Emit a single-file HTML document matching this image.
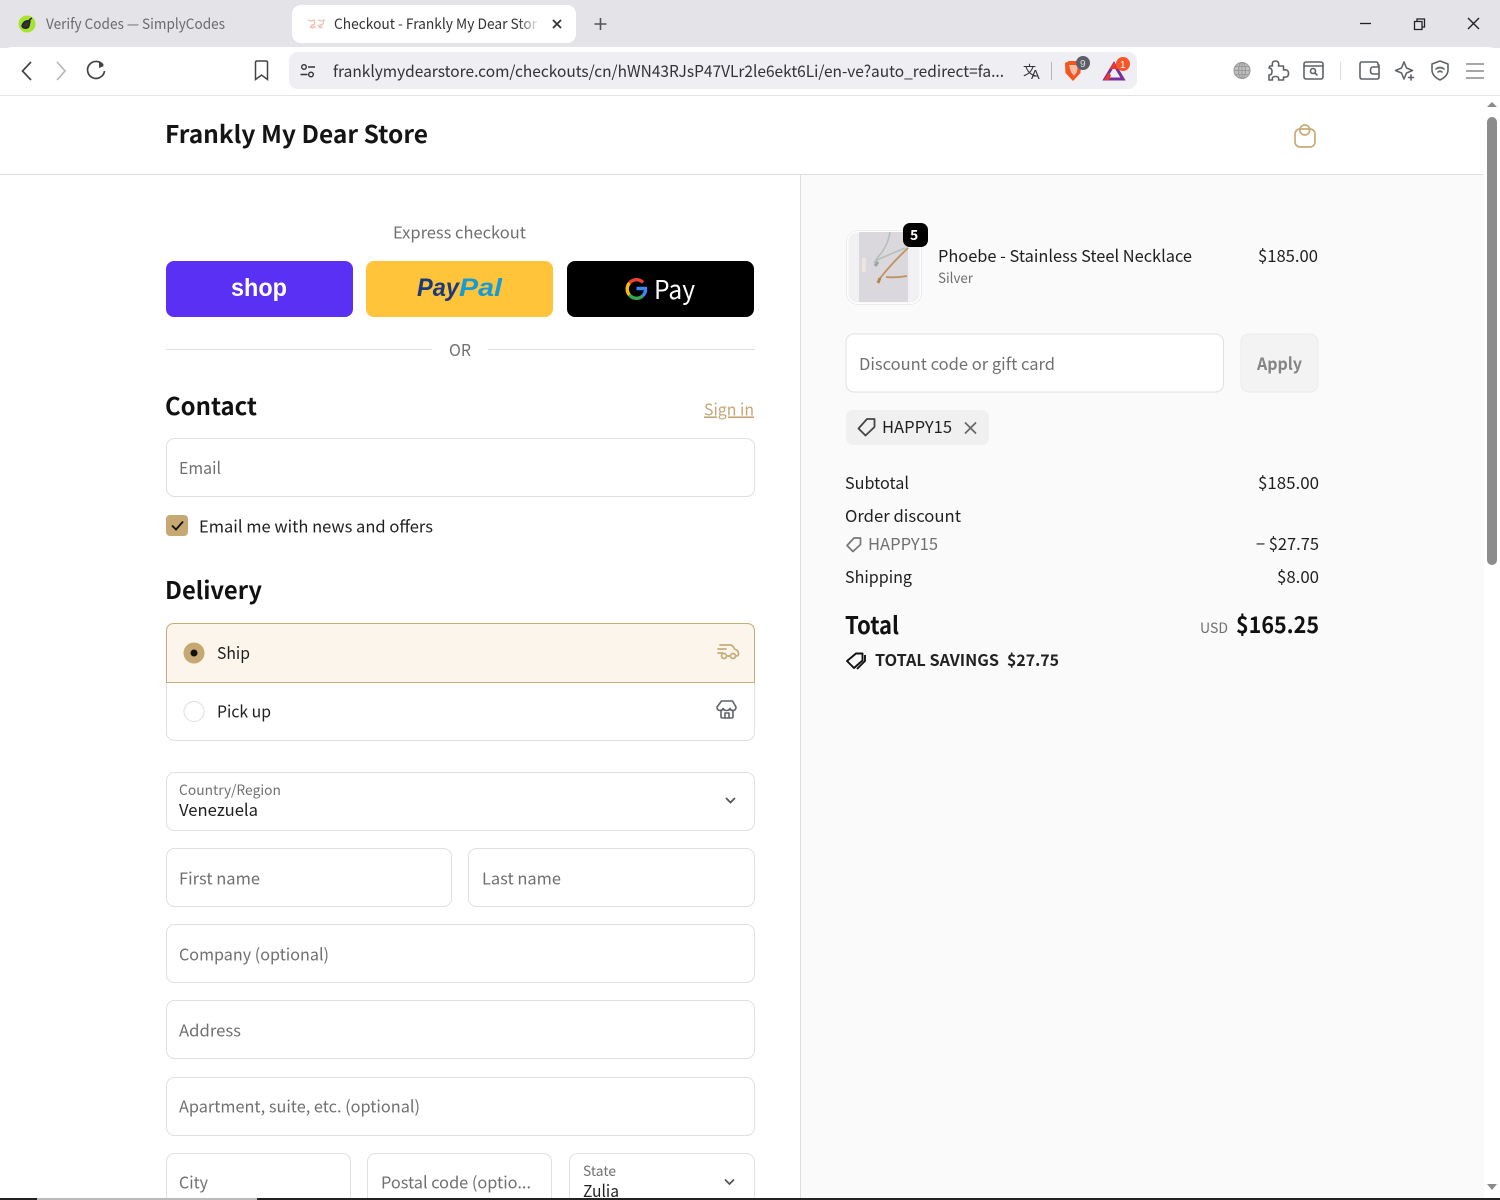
<!DOCTYPE html>
<html lang="en"><head><meta charset="utf-8"><title>Checkout - Frankly My Dear Store</title>
<style>
html,body{margin:0;padding:0;width:1500px;height:1200px;overflow:hidden;background:#fff}
svg{display:block}
text{font-family:"Noto Sans CJK JP","Liberation Sans",sans-serif;white-space:pre}
.l{font-family:"Liberation Sans",sans-serif}
.b{fill:#1f1f1f;font-size:16.5px}
.p{fill:#707070;font-size:16.5px}
.h{fill:#111;font-size:24px;font-weight:700}
.box{fill:#fff;stroke:#e0e0e0;stroke-width:1}
.ic{fill:none;stroke:#5f6368;stroke-width:1.6;stroke-linecap:round;stroke-linejoin:round}
.g{fill:none;stroke:#c9ab78;stroke-width:1.7;stroke-linecap:round;stroke-linejoin:round}
</style></head><body>
<svg width="1500" height="1200" viewBox="0 0 1500 1200" xmlns="http://www.w3.org/2000/svg">
<defs>
<linearGradient id="fade" x1="0" x2="1"><stop offset="0" stop-color="#fff" stop-opacity="0"/><stop offset="1" stop-color="#fff"/></linearGradient>
</defs>
<!-- browser chrome -->
<rect width="1500" height="48" fill="#e3e3e8"/>
<path d="M0 96V60Q0 47 13 47H1487Q1500 47 1500 60V96Z" fill="#fff"/>
<rect x="0" y="95" width="1500" height="1" fill="#e4e4e4"/>
<circle cx="27" cy="24" r="8.5" fill="#a6e22e"/>
<path d="M22 26c1-4 4-6 8-5l-1 5c-1 3-6 3-7 0zM29 20l3-2" fill="#333" stroke="#222" stroke-width="1.400"/>
<text x="46" y="29" font-size="14.5" fill="#6b6b6b" textLength="179" lengthAdjust="spacingAndGlyphs">Verify Codes — SimplyCodes</text>
<rect x="292" y="5" width="284" height="38" rx="9" fill="#fff"/>
<path d="M308 20l3 1 3-1 1 4-3 1 3 2-3 1-1-2-1 2M318 20l3 1 3-1-1 4-3 1 2 2-2 1-2-3" fill="none" stroke="#edc4b5" stroke-width="1.300"/>
<text x="334" y="29" font-size="14.5" fill="#333" textLength="203" lengthAdjust="spacingAndGlyphs">Checkout - Frankly My Dear Stor</text>
<rect x="518" y="8" width="22" height="32" fill="url(#fade)"/>
<path d="M553 20l8 8M561 20l-8 8" stroke="#333" stroke-width="1.800" fill="none"/>
<path d="M600.500 18v12M594.500 24h12" stroke="#555" stroke-width="1.600" fill="none"/>
<path d="M1360 23.500h11" stroke="#222" stroke-width="1.300" fill="none"/>
<path d="M1414.500 21.500h7.500v8h-7.500zM1417 21.500v-2.500h7.500v8h-2.500" stroke="#222" stroke-width="1.300" fill="none"/>
<path d="M1468 18l11 11M1479 18l-11 11" stroke="#222" stroke-width="1.400" fill="none"/>
<path d="M31 62l-8.500 9 8.500 9" fill="none" stroke="#444" stroke-width="1.700"/>
<path d="M57 62l8 9-8 9" fill="none" stroke="#b5b5b5" stroke-width="1.600"/>
<path d="M103 65a8.500 8.500 0 1 0 1.500 6" fill="none" stroke="#444" stroke-width="1.700"/>
<path d="M99 62l5 4-5 2z" fill="#444"/>
<path d="M255.500 62.500q0-1.500 1.500-1.500h9q1.500 0 1.500 1.500v17l-6-4.500-6 4.500z" fill="none" stroke="#444" stroke-width="1.500"/>
<rect x="289" y="52" width="848" height="37" rx="9" fill="#eeeef3"/>
<g fill="none" stroke="#333" stroke-width="1.400"><circle cx="304" cy="67" r="2.300"/><path d="M308 67h7M300.500 74.500h7"/><circle cx="311" cy="74.500" r="2.300"/></g>
<text x="333" y="77" font-size="16" fill="#333" textLength="671" lengthAdjust="spacingAndGlyphs">franklymydearstore.com/checkouts/cn/hWN43RJsP47VLr2le6ekt6Li/en-ve?auto_redirect=fa...</text>
<text x="1023" y="75" font-size="13" fill="#333">文</text><text x="1031" y="79" font-size="13" fill="#333" class="l">A</text>
<rect x="1051" y="62" width="1" height="18" fill="#b5b5ba"/>
<path d="M1065 63l4-2h8l4 2-.500 10-7.500 8-7.500-8z" fill="#f1571f"/>
<path d="M1069 65h9l-1 7-3 4-3-4z" fill="#fff" opacity=".6"/>
<circle cx="1083" cy="63" r="7" fill="#5c5f69"/><text x="1080" y="67" font-size="10" fill="#ddd" class="l">9</text>
<path d="M1114 64l9 15h-18z" fill="none" stroke="#7b2f9c" stroke-width="3"/>
<path d="M1114 62l4.500 7-9 0z" fill="#e8392c"/><path d="M1104 80l4-7 3 2-2 5z" fill="#e8392c"/>
<circle cx="1123" cy="64" r="7" fill="#f5562a"/><text x="1120" y="68" font-size="10" fill="#fff" class="l">1</text>
<g fill="#c0c0c0" stroke="#9a9a9a" stroke-width="1.100"><circle cx="1242" cy="70.500" r="8"/><ellipse cx="1242" cy="70.500" rx="3.500" ry="8" fill="none"/><path d="M1234 70.500h16M1235 66.500h14M1235 74.500h14M1242 62.500v16" fill="none"/></g>
<path class="ic" d="M1273 66h2.500q-1-5 3-5t3 5h5v4q5-1 5 3.500t-5 3.500v3h-5q1-3.500-3-3.500t-3 3.500h-3.500v-5q3 0 3-3.500t-3-3.500z" transform="translate(-3 0) scale(1 1)" stroke="#555" stroke-width="1.800"/>
<g class="ic"><rect x="1304" y="62" width="19" height="17" rx="2"/><path d="M1304 66h19"/><circle cx="1313" cy="71" r="2.500"/><path d="M1315 73l2 2"/></g>
<rect x="1340" y="62" width="1" height="18" fill="#dcdcdc"/>
<g class="ic"><path d="M1378 65v-1q0-2-2-2h-14q-2 0-2 2v13q0 2 2 2h15q2 0 2-2v-12z"/><path d="M1379 67h-6q-2.500 0-2.500 3.500t2.500 3.500h6"/></g>
<path class="ic" d="M1404 62l2.500 6 6 2.500-6 2.500-2.500 6-2.500-6-6-2.500 6-2.500zM1411 75v5M1408.500 77.500h5" stroke="#444"/>
<g class="ic"><path d="M1440 61l8 3v6q0 6-8 10-8-4-8-10v-6z"/><path d="M1436 69q4-3 8 0M1438 72q2-1.500 4 0"/></g>
<path d="M1466 64h18M1466 71h18M1466 78h18" stroke="#8a8a8a" stroke-width="1.600" fill="none"/>
<!-- scrollbar -->
<path d="M1492 102l5 5h-10z" fill="#8a8a8a"/>
<rect x="1487" y="117" width="10" height="448" rx="5" fill="#8c8c8c"/>
<path d="M1487 1184h10l-5 6z" fill="#8a8a8a"/>
<!-- header -->
<text x="165" y="143" font-size="24" font-weight="700" fill="#141414" textLength="263" lengthAdjust="spacingAndGlyphs">Frankly My Dear Store</text>
<g class="g"><rect x="1295" y="129" width="20" height="18" rx="5"/><circle cx="1304.800" cy="130" r="5"/></g>
<rect x="0" y="174" width="1483" height="1" fill="#dedede"/>
<!-- right panel -->
<rect x="801" y="175" width="683" height="1023" fill="#fafafa"/>
<rect x="800" y="175" width="1" height="1023" fill="#dedede"/>
<!-- express -->
<text x="393" y="238.400" class="p" textLength="133" lengthAdjust="spacingAndGlyphs">Express checkout</text>
<rect x="166" y="261" width="187" height="56" rx="8" fill="#5a31f4"/>
<text x="231" y="296" font-size="25" font-weight="700" fill="#fff" textLength="56" lengthAdjust="spacingAndGlyphs" class="l">shop</text>
<rect x="366" y="261" width="187" height="56" rx="8" fill="#ffc439"/>
<text x="417" y="296" font-size="25" font-weight="700" font-style="italic" fill="#1a3a7c" textLength="42" lengthAdjust="spacingAndGlyphs" class="l">Pay</text>
<text x="459" y="296" font-size="25" font-weight="700" font-style="italic" fill="#179bd7" textLength="43" lengthAdjust="spacingAndGlyphs" class="l">Pal</text>
<rect x="567" y="261" width="187" height="56" rx="8" fill="#000"/>
<g fill="none" stroke-width="3.400"><path d="M643 282.500a9 9 0 0 0-13.500 .5" stroke="#ea4335"/><path d="M629.500 283a9 9 0 0 0 0 12" stroke="#fbbc04"/><path d="M629.500 295a9 9 0 0 0 13 1" stroke="#34a853"/><path d="M642.500 296q3.500-3 3-7.500h-9" stroke="#4285f4"/></g>
<text x="654" y="299" font-size="26" fill="#fff" textLength="41" lengthAdjust="spacingAndGlyphs">Pay</text>
<rect x="166" y="349" width="266" height="1" fill="#dedede"/><rect x="488" y="349" width="267" height="1" fill="#dedede"/>
<text x="449" y="356" class="p" textLength="22" lengthAdjust="spacingAndGlyphs">OR</text>
<!-- contact -->
<text x="165" y="415" class="h" textLength="92" lengthAdjust="spacingAndGlyphs">Contact</text>
<text x="704" y="415.400" font-size="16.500" fill="#c6a878" text-decoration="underline" textLength="50" lengthAdjust="spacingAndGlyphs">Sign in</text>
<rect x="166.500" y="438.500" width="588" height="58" rx="8" class="box"/>
<text x="179" y="474" class="p" textLength="42" lengthAdjust="spacingAndGlyphs">Email</text>
<rect x="166" y="515" width="22" height="21" rx="4" fill="#c6a972"/>
<path d="M172 525.500l4 4 7-8" fill="none" stroke="#111" stroke-width="1.800"/>
<text x="199" y="532.400" class="b" textLength="234" lengthAdjust="spacingAndGlyphs">Email me with news and offers</text>
<!-- delivery -->
<text x="165" y="599" class="h" textLength="97" lengthAdjust="spacingAndGlyphs">Delivery</text>
<rect x="166.500" y="623.500" width="588" height="117" rx="8" class="box"/>
<path d="M166.500 682.500V631.500q0-8 8-8H746.500q8 0 8 8V682.500Z" fill="#fbf5ec" stroke="#c9ab78"/>
<circle cx="194" cy="653" r="10.500" fill="#c6a972"/><circle cx="194" cy="653" r="3.500" fill="#111"/>
<text x="217" y="659" class="b" textLength="33" lengthAdjust="spacingAndGlyphs">Ship</text>
<g class="g"><path d="M720 645h10q3 0 4.500 4l2 1q2 1 2 4q0 2-2 2M718 649h8M718 653h5"/><circle cx="724" cy="656" r="2.500"/><circle cx="733" cy="656" r="2.500"/><path d="M727 656h3"/></g>
<circle cx="194" cy="711.500" r="10" fill="#fff" stroke="#dedede"/>
<text x="217" y="717.400" class="b" textLength="54" lengthAdjust="spacingAndGlyphs">Pick up</text>
<g class="ic" stroke-width="1.800"><path d="M721.500 701h11l3.500 6q0 3-2.500 3.500-3 0-3.500-2-1 2-3.500 2t-3.500-2q-.5 2-3.500 2-2.500-.5-2.500-3.500z"/><path d="M721 710.500v6q0 1.500 1.500 1.500h9q1.500 0 1.500-1.500v-6M725 718v-5h4v5"/></g>
<!-- address -->
<rect x="166.500" y="772.500" width="588" height="58" rx="8" class="box"/>
<text x="179" y="795" font-size="14" fill="#707070" textLength="102" lengthAdjust="spacingAndGlyphs">Country/Region</text>
<text x="179" y="816" class="b" textLength="79" lengthAdjust="spacingAndGlyphs">Venezuela</text>
<path d="M726 798l4.500 4.500 4.500-4.500" fill="none" stroke="#555" stroke-width="1.700"/>
<rect x="166.500" y="848.500" width="285" height="58" rx="8" class="box"/>
<text x="179" y="884.400" class="p" textLength="81" lengthAdjust="spacingAndGlyphs">First name</text>
<rect x="468.500" y="848.500" width="286" height="58" rx="8" class="box"/>
<text x="482" y="884.400" class="p" textLength="79" lengthAdjust="spacingAndGlyphs">Last name</text>
<rect x="166.500" y="924.500" width="588" height="58" rx="8" class="box"/>
<text x="179" y="960.400" class="p" textLength="150" lengthAdjust="spacingAndGlyphs">Company (optional)</text>
<rect x="166.500" y="1000.500" width="588" height="58" rx="8" class="box"/>
<text x="179" y="1036.400" class="p" textLength="62" lengthAdjust="spacingAndGlyphs">Address</text>
<rect x="166.500" y="1077.500" width="588" height="58" rx="8" class="box"/>
<text x="179" y="1112.400" class="p" textLength="241" lengthAdjust="spacingAndGlyphs">Apartment, suite, etc. (optional)</text>
<rect x="166.500" y="1153.500" width="184" height="70" rx="8" class="box"/>
<text x="179" y="1188.400" class="p" textLength="29" lengthAdjust="spacingAndGlyphs">City</text>
<rect x="367.500" y="1153.500" width="184" height="70" rx="8" class="box"/>
<text x="381" y="1188.400" class="p" textLength="150" lengthAdjust="spacingAndGlyphs">Postal code (optio...</text>
<rect x="569.500" y="1153.500" width="185" height="70" rx="8" class="box"/>
<text x="583" y="1176" font-size="14" fill="#707070" textLength="33" lengthAdjust="spacingAndGlyphs">State</text>
<text x="583" y="1197" class="b" textLength="36" lengthAdjust="spacingAndGlyphs">Zulia</text>
<path d="M725 1179.500l4.500 4.500 4.500-4.500" fill="none" stroke="#555" stroke-width="1.700"/>
<!-- product -->
<rect x="847" y="231" width="74" height="73" rx="10" fill="#f1f0f2" stroke="#fff" stroke-width="3"/>
<rect x="846.500" y="230.500" width="75" height="74" rx="11" fill="none" stroke="#ebebeb"/>
<rect x="859" y="232" width="49" height="70" fill="#dad8dc"/>
<path d="M890 232q-2 14-12 25l-4 6M905 248l-26 11-5 4" fill="none" stroke="#b4bdb8" stroke-width="1.500"/>
<path d="M878 262l-3 4" stroke="#9aa5a0" stroke-width="3"/>
<path d="M908 248q-15 14-27 29l-3 5M886 277q10 1 21-1" fill="none" stroke="#bf9260" stroke-width="1.800"/>
<path d="M880 278l-2 5" stroke="#b58450" stroke-width="3"/>
<path d="M864 258v14" stroke="#ece5dd" stroke-width="4"/>
<rect x="903" y="223" width="25" height="24" rx="7" fill="#000"/>
<text x="910" y="240" font-size="14" font-weight="700" fill="#fff">5</text>
<text x="938" y="262" class="b" textLength="254" lengthAdjust="spacingAndGlyphs">Phoebe - Stainless Steel Necklace</text>
<text x="938" y="283" font-size="14" fill="#707070" textLength="35" lengthAdjust="spacingAndGlyphs">Silver</text>
<text x="1258" y="262" class="b" textLength="60" lengthAdjust="spacingAndGlyphs">$185.00</text>
<rect x="846" y="334" width="377.500" height="58" rx="8" class="box"/>
<text x="859" y="370" class="p" textLength="196" lengthAdjust="spacingAndGlyphs">Discount code or gift card</text>
<rect x="1241" y="334" width="77" height="58" rx="8" fill="#f3f3f3" stroke="#ebebeb"/>
<text x="1257" y="370" font-size="17" font-weight="700" fill="#858585" textLength="45" lengthAdjust="spacingAndGlyphs">Apply</text>
<rect x="846" y="410" width="143" height="35" rx="7" fill="#f0f0f0"/>
<path d="M867 420h7.500v8l-9 8.500-7-7z" transform="translate(0 -1)" fill="none" stroke="#444" stroke-width="1.800" stroke-linejoin="round"/>
<text x="882" y="433" class="b" textLength="70" lengthAdjust="spacingAndGlyphs">HAPPY15</text>
<path d="M965 422.500l11 11M976 422.500l-11 11" stroke="#666" stroke-width="1.700" fill="none"/>
<!-- totals -->
<text x="845" y="489" class="b" textLength="64" lengthAdjust="spacingAndGlyphs">Subtotal</text>
<text x="1258" y="489" class="b" textLength="61" lengthAdjust="spacingAndGlyphs">$185.00</text>
<text x="845" y="522" class="b" textLength="116" lengthAdjust="spacingAndGlyphs">Order discount</text>
<path d="M854 538h6.500v6.500l-7.500 7-6-6z" fill="none" stroke="#777" stroke-width="1.700" stroke-linejoin="round"/>
<text x="868" y="550" class="p" textLength="70" lengthAdjust="spacingAndGlyphs">HAPPY15</text>
<text x="1256" y="550" class="b" textLength="63" lengthAdjust="spacingAndGlyphs">− $27.75</text>
<text x="845" y="583" class="b" textLength="67" lengthAdjust="spacingAndGlyphs">Shipping</text>
<text x="1277" y="583" class="b" textLength="42" lengthAdjust="spacingAndGlyphs">$8.00</text>
<text x="845" y="634" class="h" textLength="54" lengthAdjust="spacingAndGlyphs">Total</text>
<text x="1200" y="633" font-size="14" fill="#707070" textLength="28" lengthAdjust="spacingAndGlyphs">USD</text>
<text x="1236" y="633" font-size="23" font-weight="700" fill="#111" textLength="83" lengthAdjust="spacingAndGlyphs">$165.25</text>
<path d="M856 653.500h6.500v7l-8.500 7.500-7-7zM865 655v6l-8 8" fill="none" stroke="#111" stroke-width="1.900" stroke-linejoin="round"/>
<text x="875" y="666" font-size="16" font-weight="700" fill="#222" textLength="124" lengthAdjust="spacingAndGlyphs">TOTAL SAVINGS</text>
<text x="1007" y="666" font-size="16" font-weight="700" fill="#222" textLength="52" lengthAdjust="spacingAndGlyphs">$27.75</text>
<!-- bottom edge -->
<rect x="0" y="1198" width="1500" height="2" fill="#222"/>
<rect x="37" y="1198" width="220" height="2" fill="#bbb"/>
</svg>
</body></html>
